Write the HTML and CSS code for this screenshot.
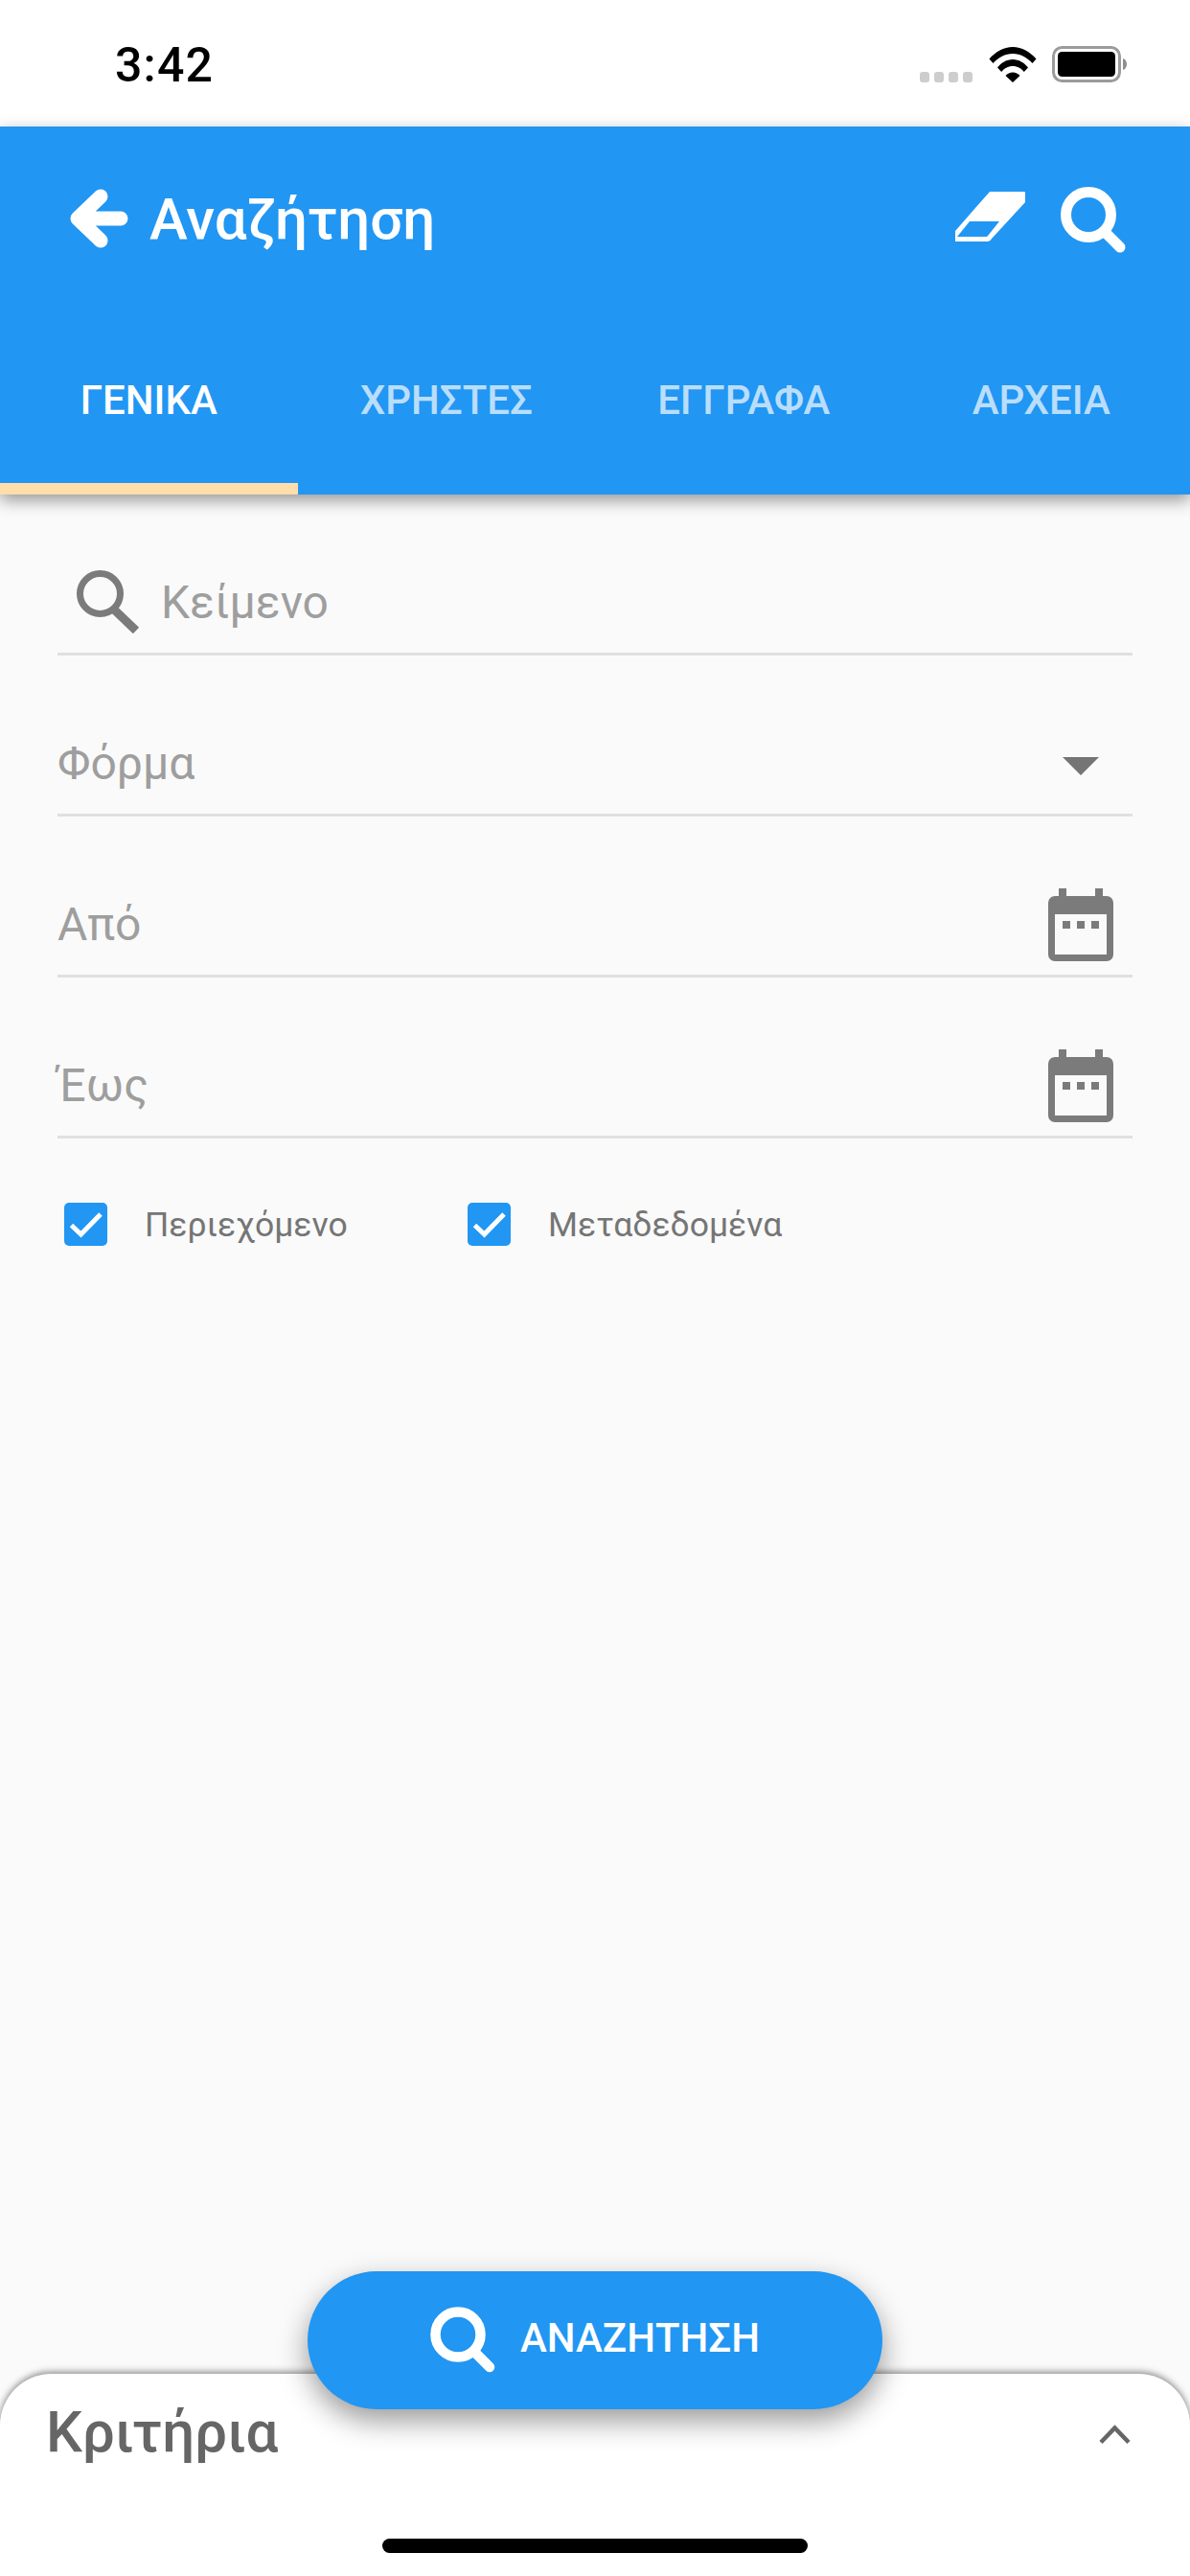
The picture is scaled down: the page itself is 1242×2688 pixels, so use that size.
FILE: index.html
```html
<!DOCTYPE html>
<html lang="el">
<head>
<meta charset="utf-8">
<title>Αναζήτηση</title>
<link rel="stylesheet" href="styles.css">
</head>
<body>
<div class="app">
  <div class="status">
    <span class="time">3:42</span>
    <div class="status-icons">
      <svg class="signal" width="56" height="11" viewBox="0 0 56 11"><rect x="0" y="0" width="10" height="11" rx="3"/><rect x="15" y="0" width="10" height="11" rx="3"/><rect x="30" y="0" width="10" height="11" rx="3"/><rect x="45" y="0" width="10" height="11" rx="3"/></svg>
      <svg class="wifi" width="50" height="38" viewBox="0 0 50 38"><path d="M0.5 13.500C7 6 15.500 1 25 1s18 5 24.500 12.500l-4 4.500C40 12 33 8 25 8S10 12 4.500 18z"/><path d="M9 22.500C13 17.500 18.500 14 25 14s12 3.500 16 8.500l-4.200 4.500C34 23.500 30 21 25 21s-9 2.500-11.800 6z"/><path d="M17.500 31c2-2 4.500-3.500 7.500-3.500s5.500 1.500 7.500 3.500L25 38z"/></svg>
      <svg class="battery" width="80" height="38" viewBox="0 0 80 38"><rect x="1.500" y="1.500" width="69" height="35" rx="9" fill="none" stroke="#9b9b9b" stroke-width="3"/><rect x="6" y="6" width="60" height="26" rx="4.500" fill="#000"/><path d="M74 13c2.500 .8 4 3 4 6s-1.500 5.200-4 6z" fill="#8e8e8e"/></svg>
    </div>
  </div>

  <header class="header">
    <div class="appbar">
      <svg class="back" width="62" height="64" viewBox="0 0 62 64"><path d="M33 9L9 32l24 23M9 32h45" fill="none" stroke="#fff" stroke-width="15" stroke-linecap="round" stroke-linejoin="round"/></svg>
      <h1 class="title">Αναζήτηση</h1>
      <svg class="eraser" width="74" height="52" viewBox="0 0 74 52"><path fill-rule="evenodd" d="M36 0h36a1 1 0 0 1 1 1v10L38 49a5 5 0 0 1-4 3H0V41z M15 31L2 47h30a2 2 0 0 0 2-1L46 31z" fill="#fff"/></svg>
      <svg class="search-white" width="70" height="70" viewBox="0 0 70 70"><circle cx="29" cy="29" r="23.500" fill="none" stroke="#fff" stroke-width="11"/><path d="M47 48l15 15" stroke="#fff" stroke-width="11" stroke-linecap="round"/></svg>
    </div>
    <nav class="tabs">
      <div class="tab tab-active">ΓΕΝΙΚΑ</div>
      <div class="tab">ΧΡΗΣΤΕΣ</div>
      <div class="tab">ΕΓΓΡΑΦΑ</div>
      <div class="tab">ΑΡΧΕΙΑ</div>
    </nav>
  </header>

  <main class="form">
    <div class="field field-first">
      <svg class="field-search" width="68" height="66" viewBox="0 0 68 66"><circle cx="24.500" cy="24.500" r="21" fill="none" stroke="#7b7b7b" stroke-width="7"/><path d="M38 40l24 23" stroke="#7b7b7b" stroke-width="9"/></svg>
      <span class="hint">Κείμενο</span>
    </div>
    <div class="field">
      <span class="hint">Φόρμα</span>
      <svg class="caret" width="38" height="19" viewBox="0 0 38 19"><path d="M0 0h38L19 19z" fill="#757575"/></svg>
    </div>
    <div class="field">
      <span class="hint">Από</span>
      <svg class="calendar" width="68" height="76" viewBox="0 0 68 76"><path fill-rule="evenodd" fill="#7b7b7b" d="M11 0h8v8h30V0h8v8h4a7 7 0 0 1 7 7v54a7 7 0 0 1-7 7H7a7 7 0 0 1-7-7V15a7 7 0 0 1 7-7h4z M7 27v42h54V27z"/><path fill="#7b7b7b" d="M15 34h8v8h-8zM30 34h8v8h-8zM45 34h8v8h-8z"/></svg>
    </div>
    <div class="field">
      <span class="hint">Έως</span>
      <svg class="calendar" width="68" height="76" viewBox="0 0 68 76"><path fill-rule="evenodd" fill="#7b7b7b" d="M11 0h8v8h30V0h8v8h4a7 7 0 0 1 7 7v54a7 7 0 0 1-7 7H7a7 7 0 0 1-7-7V15a7 7 0 0 1 7-7h4z M7 27v42h54V27z"/><path fill="#7b7b7b" d="M15 34h8v8h-8zM30 34h8v8h-8zM45 34h8v8h-8z"/></svg>
    </div>
    <div class="checks">
      <label class="check check-first">
        <svg class="box" width="45" height="45" viewBox="0 0 45 45"><rect width="45" height="45" rx="5" fill="#2196f3"/><path d="M7.500 23.500L17.500 33 38 12" fill="none" stroke="#fff" stroke-width="5"/></svg>
        <span class="check-label">Περιεχόμενο</span>
      </label>
      <label class="check">
        <svg class="box" width="45" height="45" viewBox="0 0 45 45"><rect width="45" height="45" rx="5" fill="#2196f3"/><path d="M7.500 23.500L17.500 33 38 12" fill="none" stroke="#fff" stroke-width="5"/></svg>
        <span class="check-label">Μεταδεδομένα</span>
      </label>
    </div>
  </main>

  <footer class="panel">
    <span class="panel-title">Κριτήρια</span>
    <svg class="chevron" width="36" height="22" viewBox="0 0 36 22"><path d="M3 18.500L17.500 3.500 32 18.500" fill="none" stroke="#666" stroke-width="4.500"/></svg>
    <button class="fab">
      <svg width="70" height="70" viewBox="0 0 70 70"><circle cx="29" cy="29" r="23.500" fill="none" stroke="#fff" stroke-width="10.500"/><path d="M47 48l15 15" stroke="#fff" stroke-width="10.500" stroke-linecap="round"/></svg>
      <span class="fab-label">ΑΝΑΖΗΤΗΣΗ</span>
    </button>
    <div class="home"></div>
  </footer>
</div>
</body>
</html>
```
FILE: styles.css
```css
* { box-sizing: border-box; }
html, body { margin: 0; padding: 0; }
body { font-family: Roboto, "Noto Sans", sans-serif; background: #fafafa; }
.app { width: 1242px; height: 2688px; display: flex; flex-direction: column; overflow: hidden; position: relative; }

.status { height: 132px; flex: none; background: #fff; display: flex; justify-content: space-between; padding: 0 64px 0 120px; position: relative; }
.time { font-size: 50px; font-weight: 500; letter-spacing: 1.2px; line-height: 50px; margin-top: 43px; color: #000; }
.status-icons { display: flex; align-items: flex-start; padding-top: 48px; }
.signal { fill: #cdcdcd; margin-top: 27px; margin-right: 16px; }
.wifi { fill: #000; margin-right: 16px; }

.header { flex: none; height: 384px; background: #2196f3; box-shadow: 0 6px 16px rgba(0,0,0,.4); position: relative; z-index: 2; display: flex; flex-direction: column; }
.appbar { height: 240px; display: flex; align-items: flex-start; padding: 64px 65px 0 72px; }
.back { margin-right: 22px; flex: none; }
.title { margin: -5px 0 0; font-size: 60px; line-height: 76px; font-weight: 500; color: #fff; flex: 1; }
.eraser { margin: 4px 36px 0 0; }
.search-white { margin-top: -1px; }
.tabs { display: grid; grid-template-columns: repeat(4, 1fr); flex: 1; }
.tab { font-size: 42px; font-weight: 500; color: rgba(255,255,255,.7); display: flex; justify-content: center; padding-top: 21px; line-height: 50px; height: 144px; }
.tab-active { color: #fff; border-bottom: 12px solid #ffdeac; }

.form { flex: 1; padding: 0 60px; background: #fafafa; }
.field { height: 168px; border-bottom: 3px solid #e0e0e0; display: flex; align-items: flex-end; justify-content: space-between; padding-bottom: 24px; }
.field-first { justify-content: flex-start; }
.field-search { margin: 0 20px -4px 20px; }
.hint { font-size: 48px; line-height: 56px; color: #9e9e9e; }
.caret { margin: 0 35px 16px 0; }
.calendar { margin: 0 20px -10px 0; }
.checks { display: flex; padding: 67px 0 0 7px; }
.check { display: flex; align-items: center; height: 45px; }
.check-first { width: 421px; }
.box { flex: none; margin-right: 39px; }
.check-label { font-size: 35.500px; color: #757575; }

.panel { flex: none; height: 211px; background: #fff; border-radius: 54px 54px 0 0; box-shadow: 0 -2px 7px rgba(0,0,0,.45); position: relative; z-index: 3; padding: 26px 60px 0 48px; display: flex; justify-content: space-between; align-items: flex-start; }
.panel-title { font-size: 60px; font-weight: 500; line-height: 70px; color: #666; }
.chevron { margin-top: 27px; }
.fab { position: absolute; left: 321px; top: -107px; width: 600px; height: 144px; border: 0; border-radius: 72px; background: #2196f3; box-shadow: 0 12px 30px rgba(0,0,0,.4); display: flex; align-items: center; justify-content: center; padding: 0; font-family: inherit; }
.fab-label { font-size: 42px; font-weight: 500; color: #fff; margin: 0 0 5px 24px; }
.home { position: absolute; left: 399px; bottom: 24px; width: 444px; height: 15px; border-radius: 8px; background: #000; }
```
